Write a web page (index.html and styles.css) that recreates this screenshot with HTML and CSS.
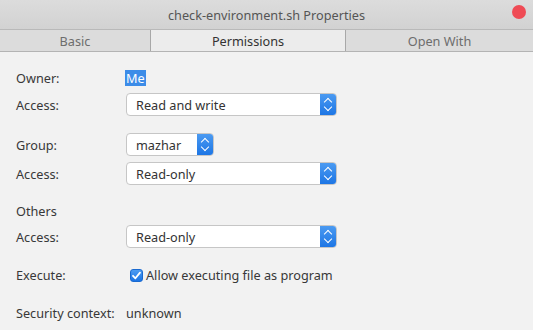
FILE: index.html
```html
<!DOCTYPE html>
<html lang="en">
<head>
  <meta charset="UTF-8" />
  <title>check-environment.sh Properties</title>
  <link rel="stylesheet" href="styles.css">
</head>
<body>
  <div class="window">
    <header class="titlebar">
      <span class="title">check-environment.sh Properties</span>
      <span class="close"></span>
    </header>

    <nav class="tabs">
      <div class="tab">Basic</div>
      <div class="tab active">Permissions</div>
      <div class="tab">Open With</div>
    </nav>

    <main class="content">
      <div class="row r-owner">
        <span class="label">Owner:</span>
        <span class="selected">Me</span>
      </div>
      <div class="row r-access1">
        <span class="label">Access:</span>
        <div class="combo wide"><span class="combo-text">Read and write</span><span class="combo-btn"></span></div>
      </div>

      <div class="row r-group">
        <span class="label">Group:</span>
        <div class="combo small"><span class="combo-text">mazhar</span><span class="combo-btn"></span></div>
      </div>
      <div class="row r-access2">
        <span class="label">Access:</span>
        <div class="combo wide"><span class="combo-text">Read-only</span><span class="combo-btn"></span></div>
      </div>

      <div class="row r-others">
        <span class="label">Others</span>
      </div>
      <div class="row r-access3">
        <span class="label">Access:</span>
        <div class="combo wide"><span class="combo-text">Read-only</span><span class="combo-btn"></span></div>
      </div>

      <div class="row r-exec">
        <span class="label">Execute:</span>
        <label class="check">
          <span class="box">
            <svg width="11" height="11" viewBox="0 0 11 11"><path d="M2 5.8 L4.4 8.3 L9 2.6" fill="none" stroke="#fff" stroke-width="1.8" stroke-linecap="round" stroke-linejoin="round"/></svg>
          </span>
          Allow executing file as program
        </label>
      </div>

      <div class="row r-security">
        <span class="label">Security context:</span>
        <span class="value">unknown</span>
      </div>
    </main>
  </div>
</body>
</html>
```

FILE: styles.css
```css
* {
  margin: 0;
  padding: 0;
  box-sizing: border-box;
}

body {
  font-family: 'Noto Sans', 'Open Sans', sans-serif;
  font-size: 12.7px;
  color: #383838;
  background: #f2f2f2;
  width: 533px;
  height: 330px;
  overflow: hidden;
}

/* Title bar */
.titlebar {
  height: 30px;
  background: linear-gradient(#dcdcdc, #d2d2d2);
  border-bottom: 1px solid #b9b9b9;
  display: flex;
  align-items: center;
  justify-content: center;
  position: relative;
}
.title {
  color: #555;
}
.close {
  position: absolute;
  right: 7px;
  top: 5px;
  width: 14px;
  height: 14px;
  border-radius: 50%;
  background: #ef4b55;
}

/* Tabs */
.tabs {
  display: flex;
  height: 22px;
  background: #dcdcdc;
  border-bottom: 1px solid #b4b4b4;
}
.tab {
  display: flex;
  align-items: center;
  justify-content: center;
  color: #6d6d6d;
}
.tab:nth-child(1) { width: 150px; }
.tab:nth-child(2) { width: 196px; }
.tab:nth-child(3) { flex: 1; }
.tab.active {
  background: #ececec;
  color: #333;
  border-left: 1px solid #a8a8a8;
  border-right: 1px solid #a8a8a8;
}

/* Content */
.content {
  padding: 14px 0 0 16px;
  display: flex;
  flex-direction: column;
}
.row {
  display: flex;
  align-items: center;
  height: 23px;
}
.label {
  width: 110px;
  flex-shrink: 0;
}
.r-owner { height: 24px; }
.r-access1 { margin-top: 3px; }
.r-group { margin-top: 17px; }
.r-access2 { margin-top: 6px; }
.r-others { margin-top: 14px; height: 24px; }
.r-access3 { margin-top: 2px; }
.r-exec { margin-top: 15px; height: 24px; }
.r-security { margin-top: 14px; height: 24px; }

.selected {
  background: #3c8ce8;
  color: #fff;
  padding: 0 1px;
  margin-left: -1px;
  line-height: 16px;
}

/* Combo boxes */
.combo {
  display: flex;
  height: 23px;
  background: #fff;
  border: 1px solid #c6c6c6;
  border-radius: 4px;
  overflow: hidden;
}
.combo.wide { width: 211px; }
.combo.small { width: 88px; }
.combo-text {
  flex: 1;
  padding-left: 9px;
  display: flex;
  align-items: center;
  color: #333;
}
.combo-btn {
  width: 17px;
  margin: -1px -1px -1px 0;
  background: linear-gradient(#4d9cf2, #1b74e4);
  position: relative;
}
.combo-btn::before,
.combo-btn::after {
  content: '';
  position: absolute;
  left: 5px;
  width: 5px;
  height: 5px;
  border-left: 1.3px solid #fff;
  border-top: 1.3px solid #fff;
}
.combo-btn::before {
  top: 6px;
  transform: rotate(45deg);
}
.combo-btn::after {
  top: 11px;
  transform: rotate(225deg);
}

/* Checkbox */
.check {
  display: flex;
  align-items: center;
  gap: 3px;
  margin-left: 4px;
}
.box {
  width: 13px;
  height: 13px;
  border-radius: 3px;
  background: linear-gradient(#4d9cf2, #1b74e4);
  border: 1px solid #1a6ad0;
  display: flex;
  align-items: center;
  justify-content: center;
}
```
